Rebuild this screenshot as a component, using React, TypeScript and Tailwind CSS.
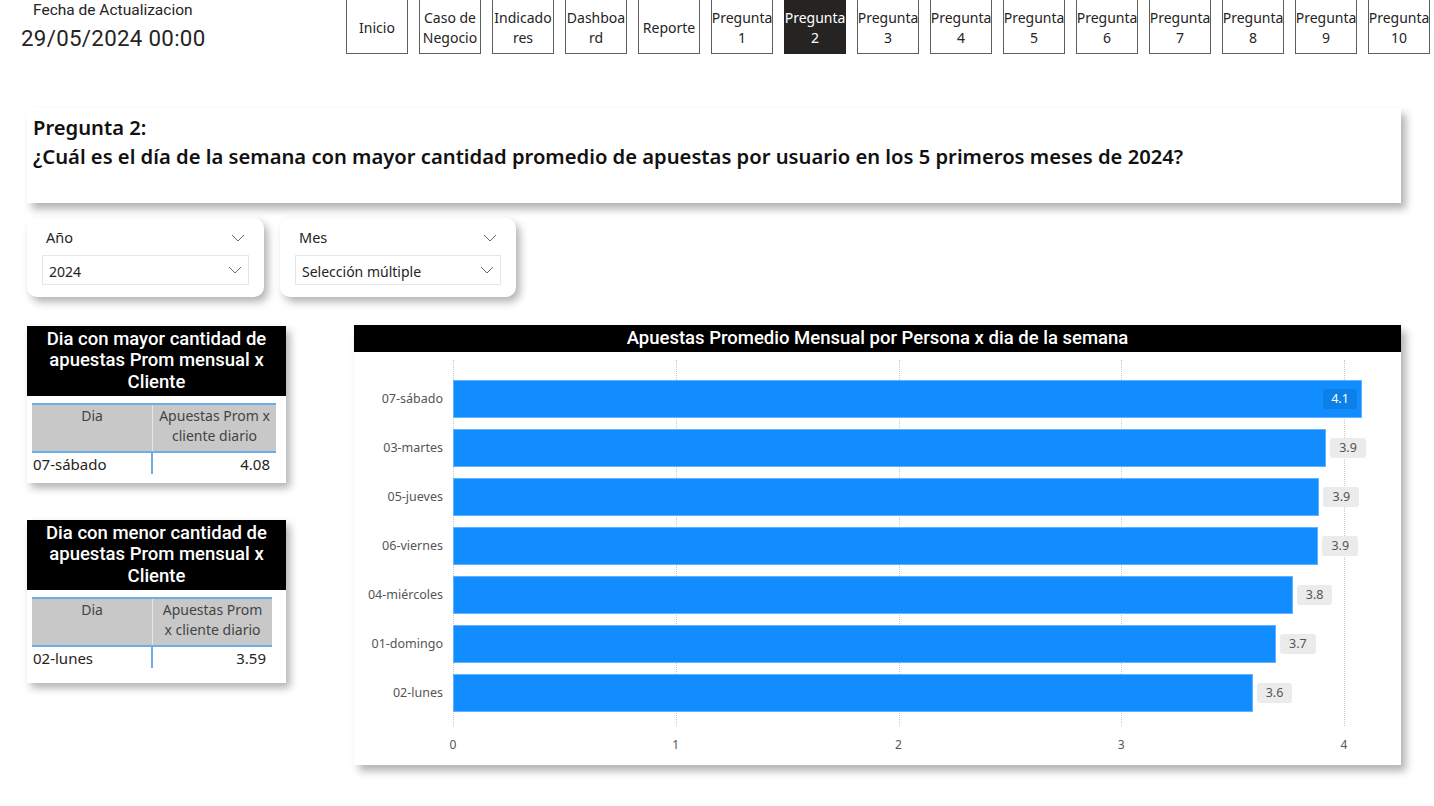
import React from "react";

const seg = "font-['Noto_Sans',sans-serif]";
const din = "font-['Roboto',sans-serif]";

const navItems: { lines: string[]; active?: boolean }[] = [
  { lines: ["Inicio"] },
  { lines: ["Caso de", "Negocio"] },
  { lines: ["Indicado", "res"] },
  { lines: ["Dashboa", "rd"] },
  { lines: ["Reporte"] },
  { lines: ["Pregunta", "1"] },
  { lines: ["Pregunta", "2"], active: true },
  { lines: ["Pregunta", "3"] },
  { lines: ["Pregunta", "4"] },
  { lines: ["Pregunta", "5"] },
  { lines: ["Pregunta", "6"] },
  { lines: ["Pregunta", "7"] },
  { lines: ["Pregunta", "8"] },
  { lines: ["Pregunta", "9"] },
  { lines: ["Pregunta", "10"] },
];

const bars = [
  { day: "07-sábado", value: 4.08, label: "4.1" },
  { day: "03-martes", value: 3.92, label: "3.9" },
  { day: "05-jueves", value: 3.89, label: "3.9" },
  { day: "06-viernes", value: 3.885, label: "3.9" },
  { day: "04-miércoles", value: 3.77, label: "3.8" },
  { day: "01-domingo", value: 3.695, label: "3.7" },
  { day: "02-lunes", value: 3.59, label: "3.6" },
];

const UNIT = 222.75;

function Chevron({ className = "" }: { className?: string }) {
  return (
    <svg width="14" height="8" viewBox="0 0 14 8" className={className}>
      <polyline points="1,1 7,7 13,1" fill="none" stroke="#6b6b6b" strokeWidth="1" />
    </svg>
  );
}

function Slicer({ title, value, width }: { title: string; value: string; width: string }) {
  return (
    <div className={`${width} h-[79px] bg-white rounded-[10px] shadow-[4px_5px_8px_rgba(0,0,0,0.3)] px-[15px] pt-[10px]`}>
      <div className="flex items-center justify-between h-[20px] pl-[4px] pr-[4px]">
        <span className={`${seg} text-[14.5px] text-[#252423]`}>{title}</span>
        <Chevron />
      </div>
      <div className="mt-[7px] h-[30px] border border-[#e6e6e6] flex items-center justify-between pl-[6px] pr-[6px]">
        <span className={`${seg} text-[14px] text-[#252423] pt-[2px]`}>{value}</span>
        <Chevron />
      </div>
    </div>
  );
}

function SummaryTable({
  title,
  head,
  day,
  value,
  tableW,
  height,
}: {
  title: string[];
  head: string[];
  day: string;
  value: string;
  tableW: string;
  height: string;
}) {
  return (
    <div className={`w-[259px] ${height} bg-white shadow-[4px_5px_8px_rgba(0,0,0,0.3)]`}>
      <div className={`bg-black h-[70px] flex flex-col items-center justify-center ${din} font-medium text-white text-[18.5px] leading-[21.5px]`}>
        {title.map((t) => (
          <div key={t}>{t}</div>
        ))}
      </div>
      <div className={`ml-[5px] mt-[7px] ${tableW} ${seg}`}>
        <div className="flex h-[50px] bg-[#c8c8c8] border-t-2 border-b-2 border-[#6aaeea] text-[14px] text-[#444] leading-[20px]">
          <div className="w-[121px] text-center pt-[1px] border-r border-[#e6e6e6]">Dia</div>
          <div className="flex-1 text-center pt-[1px]">
            {head.map((h) => (
              <div key={h}>{h}</div>
            ))}
          </div>
        </div>
        <div className="flex h-[21px] text-[15px] text-[#252423] leading-[22px]">
          <div className="w-[121px] pl-[1px] border-r-2 border-[#6aaeea]">{day}</div>
          <div className="flex-1 text-right pr-[6px]">{value}</div>
        </div>
      </div>
    </div>
  );
}

function Chart() {
  return (
    <div className="ml-[68px] w-[1047px] h-[440px] bg-white shadow-[5px_6px_8px_rgba(0,0,0,0.3)] -mt-[1px]">
      <div className={`bg-black h-[27px] flex items-center justify-center ${din} font-medium text-white text-[18.5px]`}>
        Apuestas Promedio Mensual por Persona x dia de la semana
      </div>
      <div className={`flex mt-[8px] ${seg}`}>
        <div className="w-[99px] pt-[20px] flex flex-col">
          {bars.map((b) => (
            <div
              key={b.day}
              className="h-[49px] pb-[10px] pr-[10px] flex items-center justify-end text-[12.5px] text-[#555]"
            >
              {b.day}
            </div>
          ))}
        </div>
        <div className="relative w-[940px] h-[366px]">
          {[0, 1, 2, 3, 4].map((i) => (
            <div
              key={i}
              className="absolute top-0 bottom-0 border-l border-dotted border-[#c8c8c8]"
              style={{ left: i * UNIT }}
            />
          ))}
          <div className="relative pt-[20px] flex flex-col">
            {bars.map((b, i) => (
              <div key={b.day} className="h-[49px] pb-[11px] flex items-center">
                <div
                  className="h-[38px] bg-[#118dff] border border-[#62b3ff] flex items-center justify-end pr-[4px]"
                  style={{ width: b.value * UNIT }}
                >
                  {i === 0 && (
                    <span className="h-[20px] px-[8px] rounded-[3px] bg-[#0c7fe8] text-white text-[12.5px] leading-[20px]">
                      {b.label}
                    </span>
                  )}
                </div>
                {i > 0 && (
                  <span className="ml-[4px] h-[20px] px-[9px] rounded-[3px] bg-[#ebebeb] text-[#555] text-[12.5px] leading-[20px]">
                    {b.label}
                  </span>
                )}
              </div>
            ))}
          </div>
        </div>
      </div>
      <div className={`flex ml-[99px] mt-[10px] h-[16px] ${seg} text-[12px] text-[#555]`}>
        {[0, 1, 2, 3, 4].map((i) => (
          <div key={i} className="w-[222.75px] shrink-0">
            <span className="inline-block -translate-x-1/2">{i}</span>
          </div>
        ))}
      </div>
    </div>
  );
}

export default function App() {
  return (
    <div className="w-[1434px] h-[806px] bg-white overflow-hidden">
      <div className="flex h-[55px]">
        <div className={`w-[346px] ${din} text-[#252423]`}>
          <div className="pl-[33px] pt-[0px] text-[15.5px] leading-[20px]">Fecha de Actualizacion</div>
          <div className="pl-[21px] mt-[4px] text-[22.3px] leading-[28px] tracking-[0.3px]">29/05/2024 00:00</div>
        </div>
        <div className="flex gap-[11px]">
          {navItems.map((n) => (
            <div
              key={n.lines.join("-")}
              className={`w-[62px] h-[55px] -mt-[1px] pt-[2px] border flex flex-col items-center justify-center ${seg} text-[14px] leading-[20px] ${
                n.active ? "bg-[#252423] border-[#252423] text-white" : "bg-white border-[#605e5c] text-[#252423]"
              }`}
            >
              {n.lines.map((l) => (
                <div key={l} className="whitespace-nowrap">{l}</div>
              ))}
            </div>
          ))}
        </div>
      </div>

      <div className="ml-[27px] mt-[53px] w-[1374px] h-[95px] bg-white shadow-[5px_6px_8px_rgba(0,0,0,0.3)] pl-[6px] pt-[5px]">
        <div className={`${seg} font-semibold text-[20.2px] text-[#111] leading-[29px]`}>Pregunta 2:</div>
        <div className={`${seg} font-semibold text-[20.2px] text-[#111] leading-[29px]`}>
          ¿Cuál es el día de la semana con mayor cantidad promedio de apuestas por usuario en los 5 primeros meses de 2024?
        </div>
      </div>

      <div className="flex gap-[16px] ml-[27px] mt-[15px]">
        <Slicer title="Año" value="2024" width="w-[237px]" />
        <Slicer title="Mes" value="Selección múltiple" width="w-[236px]" />
      </div>

      <div className="flex ml-[27px] mt-[29px]">
        <div className="flex flex-col gap-[37px]">
          <SummaryTable
            title={["Dia con mayor cantidad de", "apuestas Prom mensual x", "Cliente"]}
            head={["Apuestas Prom x", "cliente diario"]}
            day="07-sábado"
            value="4.08"
            tableW="w-[244px]"
            height="h-[157px]"
          />
          <SummaryTable
            title={["Dia con menor cantidad de", "apuestas Prom mensual x", "Cliente"]}
            head={["Apuestas Prom", "x cliente diario"]}
            day="02-lunes"
            value="3.59"
            tableW="w-[240px]"
            height="h-[163px]"
          />
        </div>
        <Chart />
      </div>
    </div>
  );
}
